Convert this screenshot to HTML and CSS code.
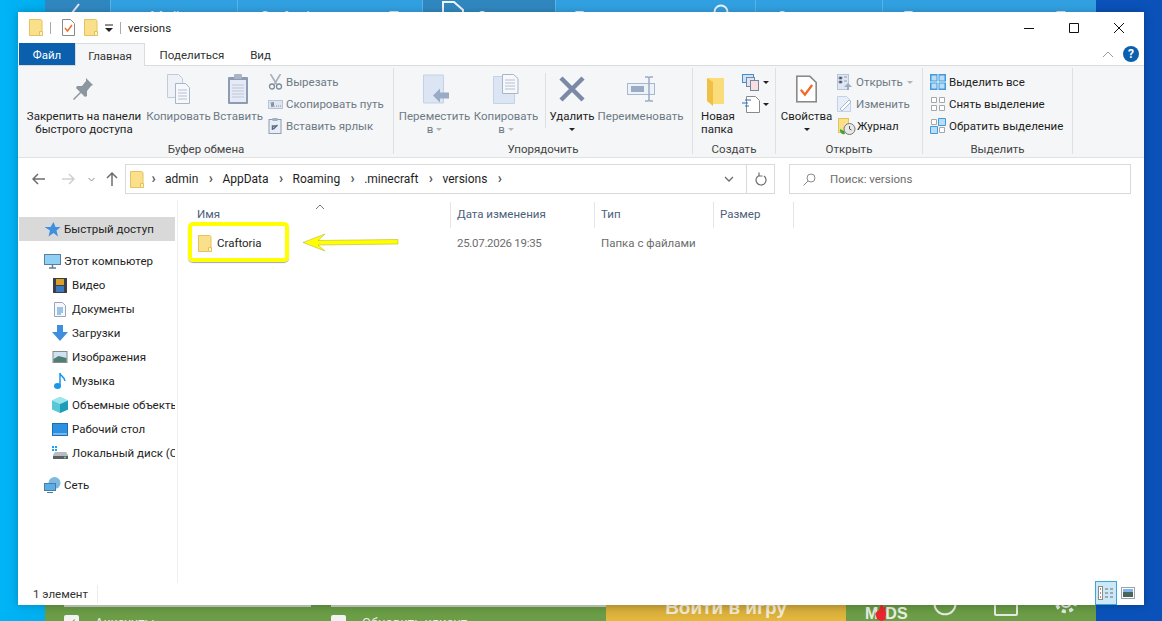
FILE: index.html
```html
<!DOCTYPE html>
<html>
<head>
    <meta charset="UTF-8">
    <title>versions</title>
    <link rel="stylesheet" href="styles.css">
</head>
<body>
    <svg class="defs" width="0" height="0">
        <symbol id="folder" viewBox="0 0 14 17">
            <path d="M.5.5h11l1.500 1v15H.5z" fill="#fbe08c" stroke="#e6c25f"/>
            <path d="M10.500 16.500v-4h3v4z" fill="#fff3c4" stroke="#e6c25f"/>
        </symbol>
        <symbol id="props" viewBox="0 0 13 17">
            <path d="M.5.5h8l4 4v12H.5z" fill="#fff" stroke="#8a8a8a"/>
            <path d="M3 9l2.500 3L10 6" fill="none" stroke="#f0692a" stroke-width="1.400"/>
        </symbol>
    </svg>

    <div class="site-top">
        <div class="site-tab dark"><svg width="20" height="20" viewBox="0 0 20 20"><path d="M3 18L14 4" stroke="#e8eef4" stroke-width="2"/></svg></div>
        <div class="site-tab w-home">Мой дом</div>
        <div class="site-tab w-craft">Craftoria<span class="site-caret"></span></div>
        <div class="site-tab dark w-create"><svg width="24" height="30" viewBox="0 0 24 30"><path d="M2 2h11l9 8v18H2z" fill="none" stroke="#eef4f8" stroke-width="2"/></svg><span>Создать</span></div>
        <div class="site-tab w-search">Поиск<svg class="site-loupe" width="20" height="24" viewBox="0 0 20 24"><circle cx="10" cy="12" r="6.500" fill="none" stroke="#eef4f8" stroke-width="2"/></svg></div>
        <div class="site-tab w-sort">Сортировать</div>
        <div class="site-tab w-pop">Популярные<span class="site-caret"></span></div>
    </div>

    <div class="site-bottom">
        <div class="site-check"><span class="box">✓</span>Аккаунты</div>
        <div class="site-check second"><span class="box"></span>Обновить клиент</div>
        <div class="site-play">Войти в игру</div>
        <div class="site-tools">
            <div class="mods">M<svg width="13" height="18" viewBox="0 0 14 20"><path d="M7 0l2 5 3-1-1 5 3 3-3 3 1 3-5 2-5-2-2-6 3-4 1 1z" fill="#e8262c"/></svg>DS</div>
            <svg class="t-arc" width="24" height="24" viewBox="0 0 24 24"><path d="M4 5a10.500 10.500 0 1 0 16 0" fill="none" stroke="#e4e8e0" stroke-width="2"/></svg>
            <span class="tool-box"></span>
            <svg class="t-gear" width="24" height="26" viewBox="0 0 24 26"><circle cx="12" cy="12" r="5" fill="none" stroke="#e4e8e0" stroke-width="2"/><circle cx="12" cy="12" r="9.500" fill="none" stroke="#e4e8e0" stroke-width="3.500" stroke-dasharray="4 3.500"/></svg>
        </div>
    </div>

    <div class="window">
        <div class="titlebar">
            <svg class="ic-folder" width="14" height="17"><use href="#folder"/></svg>
            <span class="qa-sep"></span>
            <svg class="ic-props" width="13" height="17"><use href="#props"/></svg>
            <svg class="ic-folder2" width="14" height="17"><use href="#folder"/></svg>
            <svg class="qa-drop" width="8" height="8" viewBox="0 0 8 8"><path d="M0 1h8" stroke="#222"/><path d="M0 4h8L4 8z" fill="#222"/></svg>
            <span class="qa-sep second"></span>
            <span class="title">versions</span>
            <div class="win-controls">
                <svg width="45" height="30" viewBox="0 0 45 30"><path d="M18 15.500h10" stroke="#111"/></svg>
                <svg width="45" height="30" viewBox="0 0 45 30"><path d="M18.500 10.500h9v9h-9z" fill="none" stroke="#111"/></svg>
                <svg width="45" height="30" viewBox="0 0 45 30"><path d="M18 10l10 10M28 10L18 20" stroke="#111"/></svg>
            </div>
        </div>

        <div class="tabs">
            <div class="tab file">Файл</div>
            <div class="tab active">Главная</div>
            <div class="tab share">Поделиться</div>
            <div class="tab view">Вид</div>
            <div class="tabs-right">
                <svg width="12" height="8" viewBox="0 0 12 8"><path d="M1 7l5-5 5 5" fill="none" stroke="#9a9a9a"/></svg>
                <span class="help">?</span>
            </div>
        </div>

        <div class="ribbon">
            <div class="group g-clip">
                <div class="group-body">
                    <div class="big w-pin">
                        <svg class="big-ic" width="26" height="30" viewBox="0 0 26 30"><path d="M15 4l7 7-2 1-4 5v5l-2 1-4-4-7 7-1-1 7-7-4-4 1-2h5l4-5z" fill="#8c969f"/></svg>
                        <div class="big-label">Закрепить на панели<br>быстрого доступа</div>
                    </div>
                    <div class="big off w-copy">
                        <svg class="big-ic" width="26" height="32" viewBox="0 0 26 32"><path d="M1.500 1.500h11l4 4v19h-15z" fill="#eef1f6" stroke="#c3cbd8"/><path d="M9.500 10.500h10l4 4v16h-14z" fill="#f7f8fb" stroke="#a9b5c8"/><path d="M12 17h9M12 20h9M12 23h9M12 26h9" stroke="#b5c0d2"/></svg>
                        <div class="big-label">Копировать</div>
                    </div>
                    <div class="big off w-paste">
                        <svg class="big-ic" width="22" height="32" viewBox="0 0 22 32"><rect x="1" y="4" width="20" height="27" rx="1" fill="#8d9bb3"/><rect x="3" y="7" width="16" height="22" fill="#e6eaf4"/><path d="M5 12h12M5 15h12M5 18h12M5 21h12M5 24h12" stroke="#bcc6d8"/><rect x="7" y="1" width="8" height="5" rx="1" fill="#aab4c4"/></svg>
                        <div class="big-label">Вставить</div>
                    </div>
                    <div class="small-col off">
                        <div class="small"><svg width="14" height="16" viewBox="0 0 14 16"><path d="M2 0l6 10M12 0L6 10" stroke="#a8b0bb" stroke-width="1.600"/><circle cx="3.500" cy="12.500" r="2.500" fill="none" stroke="#7f8b9a" stroke-width="1.300"/><circle cx="10.500" cy="12.500" r="2.500" fill="none" stroke="#7f8b9a" stroke-width="1.300"/></svg>Вырезать</div>
                        <div class="small"><svg width="15" height="9" viewBox="0 0 15 9"><rect x=".5" y=".5" width="14" height="8" fill="#dfe6f2" stroke="#b7c3d6"/><path d="M3 2l1 5 1-5 1 5M8 6h1M10 6h1M12 6h1" fill="none" stroke="#66758c" stroke-width=".8"/></svg>Скопировать путь</div>
                        <div class="small"><svg width="14" height="16" viewBox="0 0 14 16"><rect x=".5" y="1.500" width="12" height="14" fill="#e9edf5" stroke="#8d9bb3"/><rect x="4" y="0" width="5" height="3" fill="#a3aec0"/><path d="M4 12V8h4M5 11l4-4" fill="none" stroke="#5c6b82" stroke-width="1.500"/></svg>Вставить ярлык</div>
                    </div>
                </div>
                <div class="group-name">Буфер обмена</div>
            </div>

            <div class="group g-org">
                <div class="group-body">
                    <div class="big off w-move">
                        <svg class="big-ic" width="28" height="29" viewBox="0 0 28 29"><path d="M.500.500h20v28h-20z" fill="#dce5f3" stroke="#c4d1e6"/><path d="M10 21l7-7v4h9v6h-9v4z" fill="#9aabc6"/></svg>
                        <div class="big-label">Переместить<br>в <i class="caret grey"></i></div>
                    </div>
                    <div class="big off w-copyto">
                        <svg class="big-ic" width="26" height="30" viewBox="0 0 26 30"><path d="M.500 2.500h21v27H.500z" fill="#dce5f3" stroke="#c4d1e6"/><path d="M9.500.500h11l4.500 4v15H9.500z" fill="#f6f8fb" stroke="#a9b5c8"/><path d="M12 6h10M12 9h10M12 12h10M12 15h10" stroke="#b5c0d2"/></svg>
                        <div class="big-label">Копировать<br>в <i class="caret grey"></i></div>
                    </div>
                    <span class="inner-sep"></span>
                    <div class="big w-del">
                        <svg class="big-ic" width="26" height="26" viewBox="0 0 26 26"><path d="M2 2l22 22M24 2L2 24" stroke="#7a8aa6" stroke-width="4.500"/></svg>
                        <div class="big-label">Удалить<br><i class="caret"></i></div>
                    </div>
                    <div class="big off w-ren">
                        <svg class="big-ic" width="28" height="26" viewBox="0 0 28 26"><rect x=".5" y="7.500" width="27" height="11" fill="#edf1f8" stroke="#a9b7ce"/><rect x="4" y="10" width="13" height="6" fill="#9aabc6"/><path d="M18 1h3l1 1 1-1h3M22 2v22M18 25h3l1-1 1 1h3" fill="none" stroke="#9aabc6" stroke-width="1.500"/></svg>
                        <div class="big-label">Переименовать</div>
                    </div>
                </div>
                <div class="group-name">Упорядочить</div>
            </div>

            <div class="group g-new">
                <div class="group-body">
                    <div class="big left w-newf">
                        <svg class="big-ic" width="20" height="28" viewBox="0 0 20 28"><path d="M0 0h17v26H5l-5-3z" fill="#fadc7a"/><path d="M0 0l6 4v24l-6-5z" fill="#f0bf45"/></svg>
                        <div class="big-label">Новая<br>папка</div>
                    </div>
                    <div class="mini-col">
                        <div class="mini"><svg width="19" height="17" viewBox="0 0 19 17"><rect x=".5" y=".5" width="11" height="8" fill="#cfe3f6" stroke="#3f8fd0"/><rect x="4.500" y="3.500" width="8" height="9" fill="#dfe6f2" stroke="#77869c"/><rect x="8.500" y="6.500" width="8" height="10" fill="#f7dfe0" stroke="#77869c"/></svg><i class="caret"></i></div>
                        <div class="mini"><svg width="19" height="17" viewBox="0 0 19 17"><path d="M4.500.5h9l4 4v12h-13z" fill="#fff" stroke="#8a8a8a"/><path d="M3 4h6M0 7h6M3 10h4" stroke="#2a6fc0" stroke-width="1.200"/></svg><i class="caret"></i></div>
                    </div>
                </div>
                <div class="group-name">Создать</div>
            </div>

            <div class="group g-open">
                <div class="group-body">
                    <div class="big w-props">
                        <svg class="big-ic" width="21" height="28" viewBox="0 0 13 17"><use href="#props"/></svg>
                        <div class="big-label">Свойства<br><i class="caret"></i></div>
                    </div>
                    <div class="small-col tight">
                        <div class="small off"><svg width="15" height="16" viewBox="0 0 15 16"><rect x=".5" y=".5" width="11" height="15" fill="#dfe6f2" stroke="#b7c3d6"/><path d="M2 3h3v2H2zM2 7h3v2H2zM7 3h3M7 7h3" stroke="#8d9bb3"/><path d="M11 9l4 4h-3v3h-2v-3H7z" fill="#9aabc6"/></svg>Открыть <i class="caret grey"></i></div>
                        <div class="small off"><svg width="15" height="16" viewBox="0 0 15 16"><path d="M.5.5h9l4 4v11H.5z" fill="#e7eef8" stroke="#c4d1e6"/><path d="M3 13l9-9 2 2-9 9z" fill="#fff" stroke="#a9b7ce"/></svg>Изменить</div>
                        <div class="small journal"><svg width="18" height="17" viewBox="0 0 18 17"><rect x=".5" y=".5" width="10" height="14" fill="#fbe08c" stroke="#e6c25f"/><circle cx="11.500" cy="11" r="5.500" fill="#e8e8e8" stroke="#777"/><path d="M11.500 8v3l2 1" fill="none" stroke="#555"/><path d="M2 11a4 4 0 0 0 5 5l-1-3z" fill="#3fa535"/></svg>Журнал</div>
                    </div>
                </div>
                <div class="group-name">Открыть</div>
            </div>

            <div class="group g-sel">
                <div class="group-body">
                    <div class="small-col sel">
                        <div class="small"><svg width="16" height="16" viewBox="0 0 16 16"><path d="M0 0h7.500v7.500H0zM8.500 0H16v7.500H8.500zM0 8.500h7.500V16H0zM8.500 8.500H16V16H8.500z" fill="#3f9be0"/><path d="M1.500 1.500h5v5h-5zM9.500 9.500h5v5h-5zM9.500 1.500h5v5h-5zM1.500 9.500h5v5h-5z" fill="#bcdcf5"/></svg>Выделить все</div>
                        <div class="small"><svg width="16" height="16" viewBox="0 0 16 16"><path d="M1.500 1.500h5v5h-5zM9.500 1.500h5v5h-5zM1.500 9.500h5v5h-5zM9.500 9.500h5v5h-5z" fill="#fff" stroke="#a8a8a8"/></svg>Снять выделение</div>
                        <div class="small"><svg width="16" height="16" viewBox="0 0 16 16"><path d="M1.500 1.500h5v5h-5zM9.500 9.500h5v5h-5z" fill="#fff" stroke="#a8a8a8"/><path d="M8.500.5h7v7h-7zM.5 8.500h7v7h-7z" fill="#bcdcf5" stroke="#3f9be0"/></svg>Обратить выделение</div>
                    </div>
                </div>
                <div class="group-name">Выделить</div>
            </div>
        </div>

        <div class="addr-row">
            <div class="nav-btns">
                <svg width="13" height="12" viewBox="0 0 13 12"><path d="M6 1L1 6l5 5M1 6h12" fill="none" stroke="#6d6d6d" stroke-width="1.500"/></svg>
                <svg width="13" height="12" viewBox="0 0 13 12"><path d="M7 1l5 5-5 5M12 6H0" fill="none" stroke="#cfcfcf" stroke-width="1.500"/></svg>
                <svg width="7" height="5" viewBox="0 0 7 5"><path d="M.5 1l3 3 3-3" fill="none" stroke="#8a8a8a"/></svg>
                <svg width="12" height="14" viewBox="0 0 12 14"><path d="M1 6l5-5 5 5M6 1v13" fill="none" stroke="#6d6d6d" stroke-width="1.500"/></svg>
            </div>
            <div class="addr">
                <svg class="addr-folder" width="14" height="17"><use href="#folder"/></svg>
                <span class="chev">›</span><span class="crumb">admin</span>
                <span class="chev">›</span><span class="crumb">AppData</span>
                <span class="chev">›</span><span class="crumb">Roaming</span>
                <span class="chev">›</span><span class="crumb">.minecraft</span>
                <span class="chev">›</span><span class="crumb">versions</span>
                <span class="chev">›</span>
                <div class="addr-end">
                    <svg class="addr-drop" width="10" height="6" viewBox="0 0 10 6"><path d="M1 1l4 4 4-4" fill="none" stroke="#6d6d6d" stroke-width="1.300"/></svg>
                    <span class="refresh"><svg width="12" height="14" viewBox="0 0 12 14"><path d="M9 4a5 5 0 1 1-5-.5M4 .5v3.500h3.500" fill="none" stroke="#6d6d6d" stroke-width="1.200"/></svg></span>
                </div>
            </div>
            <div class="search">
                <svg width="13" height="13" viewBox="0 0 13 13"><circle cx="8" cy="5" r="4" fill="none" stroke="#8a8a8a"/><path d="M5 8l-4.500 4.500" stroke="#8a8a8a"/></svg>
                <span>Поиск: versions</span>
            </div>
        </div>

        <div class="main">
            <div class="nav-pane">
                <div class="nav-row top selected"><svg width="16" height="15" viewBox="0 0 16 15"><path d="M9 0l2 5h5l-4 3.500 1.500 6L9 11l-5 3.500 1.500-6L0 5h6z" fill="#3d8fe0"/></svg>Быстрый доступ</div>
                <div class="nav-row top spaced"><svg width="17" height="15" viewBox="0 0 17 15"><rect x=".5" y=".5" width="16" height="10" fill="#8fd0f4" stroke="#5b7f9a"/><path d="M5 14h7M8.500 11v3" stroke="#5b7f9a" stroke-width="1.500"/></svg>Этот компьютер</div>
                <div class="nav-row"><svg width="14" height="15" viewBox="0 0 14 15"><rect width="14" height="15" fill="#3a3f46"/><rect x="3" y="1" width="8" height="6" fill="#d8a028"/><rect x="3" y="8" width="8" height="6" fill="#3a78c0"/></svg>Видео</div>
                <div class="nav-row"><svg width="12" height="15" viewBox="0 0 12 15"><path d="M.5.5h8l3 3v11H.5z" fill="#f6f8fb" stroke="#9aa6b6"/><path d="M3 6h6M3 8h6M3 10h6M3 12h4" stroke="#3f8fd0"/></svg>Документы</div>
                <div class="nav-row"><svg width="16" height="16" viewBox="0 0 16 16"><path d="M5 0h6v7h5l-8 9-8-9h5z" fill="#3f8fe0"/></svg>Загрузки</div>
                <div class="nav-row"><svg width="15" height="12" viewBox="0 0 15 12"><rect x=".5" y=".5" width="14" height="11" fill="#cfe3f2" stroke="#8a8a8a"/><path d="M1 8l5-3 8 2v4H1z" fill="#4f7f74"/></svg>Изображения</div>
                <div class="nav-row"><svg width="12" height="16" viewBox="0 0 12 16"><ellipse cx="3.500" cy="13" rx="3.500" ry="3" fill="#1e96e8"/><path d="M6 13V0c0 3 5 4 5 8" fill="none" stroke="#1e96e8" stroke-width="1.500"/></svg>Музыка</div>
                <div class="nav-row"><svg width="16" height="16" viewBox="0 0 16 16"><path d="M8 0l8 3.500v9L8 16l-8-3.500v-9z" fill="#58c8d8"/><path d="M8 7l8-3.500v9L8 16z" fill="#1f9cb8"/><path d="M8 0l8 3.500L8 7 0 3.500z" fill="#9ce6ee"/></svg>Объемные объекты</div>
                <div class="nav-row"><svg width="16" height="13" viewBox="0 0 16 13"><rect x=".5" y=".5" width="15" height="12" fill="#2e90e0" stroke="#1c6cb4"/><path d="M1 11h14" stroke="#bfe0f8"/></svg>Рабочий стол</div>
                <div class="nav-row"><svg width="16" height="14" viewBox="0 0 16 14"><path d="M0 0h2v2H0zM3 0h2v2H3zM0 3h2v2H0zM3 3h2v2H3z" fill="#1ea0f0"/><path d="M1 9l2-3h11l2 3v4H1z" fill="#b8bcc2"/><path d="M1 10h15v3H1z" fill="#5c6066"/><circle cx="13" cy="11.500" r="1" fill="#6ee06e"/></svg>Локальный диск (C:)</div>
                <div class="nav-row top spaced"><svg width="17" height="16" viewBox="0 0 17 16"><circle cx="10.500" cy="6" r="6" fill="#7fb8e0"/><rect x=".5" y="6.500" width="11" height="7" fill="#5aaee8" stroke="#4a7ca0"/><path d="M3 15.500h6" stroke="#4a7ca0"/></svg>Сеть</div>
            </div>
            <div class="list">
                <span class="sort-caret"><svg width="10" height="6" viewBox="0 0 10 6"><path d="M1 5l4-4 4 4" fill="none" stroke="#7a7a7a"/></svg></span>
                <div class="list-head">
                    <div class="col c-name">Имя</div>
                    <div class="col c-date">Дата изменения</div>
                    <div class="col c-type">Тип</div>
                    <div class="col c-size">Размер</div>
                </div>
                <div class="list-row">
                    <div class="col c-name file-name"><svg width="14" height="17"><use href="#folder"/></svg>Craftoria</div>
                    <div class="col c-date">25.07.2026 19:35</div>
                    <div class="col c-type">Папка с файлами</div>
                </div>
            </div>
        </div>

        <div class="statusbar">
            <span class="count">1 элемент</span>
            <div class="view-btns">
                <span class="view-btn active"><svg width="16" height="14" viewBox="0 0 16 14"><rect x=".5" y=".5" width="4" height="13" fill="#fff" stroke="#8a8a8a"/><path d="M7 3h3M12 3h3M7 7h3M12 7h3M7 11h3M12 11h3" stroke="#6d6d6d"/><path d="M2 2.500h1v1H2zM2 6.500h1v1H2z" fill="#333"/><path d="M2 10.500h1v1H2z" fill="#c00"/></svg></span>
                <span class="view-btn second"><svg width="14" height="12" viewBox="0 0 14 12"><rect x=".5" y=".5" width="13" height="11" fill="#fff" stroke="#a0a0a0"/><path d="M2 2h10v3H2z" fill="#7fb4ec"/><path d="M2 5h10v5H2z" fill="#44675e"/></svg></span>
            </div>
        </div>

        <div class="mark-box"></div>
        <svg class="mark-arrow" width="96" height="22" viewBox="0 0 96 22">
            <path d="M0 10.500L22 2l-7 6.500 80-1v4.500l-80 1 7 6z" fill="#ffff00" stroke="#b9b93a" stroke-width=".6"/>
        </svg>
    </div>
</body>
</html>
```

FILE: styles.css
```css
* {
    box-sizing: border-box;
}
html, body {
    margin: 0;
    height: 100%;
}
body {
    position: relative;
    overflow: hidden;
    font-family: Roboto, "Noto Sans", sans-serif;
    font-size: 11.5px;
    color: #1e1e1e;
    background: linear-gradient(90deg, #00b4f6 0, #00aeee 46px, #0a52ba 46px, #0a52ba 100%);
}
.defs {
    position: absolute;
}

/* the web page behind the window */
.site-top {
    position: absolute;
    top: 0;
    left: 45px;
    width: 1051px;
    height: 14px;
    overflow: hidden;
    display: flex;
    color: #e8f2fa;
    font-size: 15px;
}
.site-tab {
    position: relative;
    height: 30px;
    display: flex;
    align-items: flex-end;
    background: linear-gradient(#2f9fe0, #3cabec);
    border-right: 1px solid #5ab4e6;
    padding: 0 0 4px 40px;
    flex: none;
}
.site-tab.dark {
    background: linear-gradient(#2f86bf, #3592cc);
}
.site-tab:first-child {
    width: 66px;
    padding: 0 0 0 20px;
    align-items: flex-start;
}
.w-home { width: 127px; padding-left: 39px; }
.w-craft { width: 185px; padding-left: 22px; }
.w-create { width: 133px; padding-left: 18px; gap: 12px; }
.w-create svg { margin-bottom: -4px; }
.w-search { width: 200px; padding-left: 18px; }
.w-sort { width: 127px; padding-left: 21px; }
.w-pop { width: 213px; padding-left: 20px; border-right: none; }
.site-caret {
    position: absolute;
    right: 23px;
    top: 11px;
    width: 0;
    height: 0;
    border: 5px solid transparent;
    border-top: 5px solid #d8e8f4;
}
.w-pop .site-caret { right: 30px; }
.site-loupe {
    position: absolute;
    right: 24px;
    top: 0;
}

.site-bottom {
    position: absolute;
    left: 45px;
    bottom: 0;
    width: 1051px;
    height: 30px;
    display: flex;
    align-items: flex-start;
    overflow: hidden;
    background: linear-gradient(#5f9240, #6c9f47);
    color: #e8eee0;
    font-size: 13px;
}
.site-check {
    position: relative;
    flex: none;
    display: flex;
    gap: 16px;
    width: 266px;
    margin-top: 24px;
    padding-left: 19px;
    line-height: 16px;
}
.site-check::before {
    content: "";
    position: absolute;
    left: 19px;
    top: -10px;
    width: 247px;
    height: 2px;
    background: #c9d0c2;
}
.site-check.second {
    width: 295px;
    padding-left: 20px;
}
.site-check.second::before {
    left: 20px;
    width: 275px;
}
.site-check .box {
    width: 15px;
    height: 15px;
    border-radius: 2px;
    background: #f2f2f2;
    color: #6c9f47;
    font-size: 12px;
    line-height: 16px;
    text-align: center;
}
.site-play {
    flex: none;
    width: 240px;
    height: 30px;
    padding-top: 5px;
    background: linear-gradient(#b8953a, #e6b93c);
    color: #f0e8d0;
    font-family: "Liberation Sans", sans-serif;
    font-size: 19px;
    font-weight: bold;
    line-height: 24px;
    text-align: center;
}
.site-tools {
    flex: none;
    display: flex;
    align-items: flex-end;
    height: 30px;
    padding: 0 0 5px 19px;
}
.mods {
    display: flex;
    align-items: flex-end;
    margin-bottom: -5px;
    font-family: "Liberation Sans", sans-serif;
    font-size: 16px;
    font-weight: bold;
    line-height: 14px;
    color: #e8eee0;
    width: 40px;
}
.mods svg { margin: 0 -3px; flex: none; }
.t-arc { margin-left: 28px; flex: none; }
.tool-box {
    flex: none;
    width: 24px;
    height: 26px;
    margin-left: 37px;
    border: 2px solid #e4e8e0;
    border-radius: 2px;
}
.t-gear { margin-left: 36px; flex: none; }

/* explorer window */
.window {
    position: absolute;
    left: 18px;
    top: 12px;
    width: 1126px;
    height: 593px;
    display: flex;
    flex-direction: column;
    background: #fff;
    box-shadow: 0 0 8px rgba(0, 0, 0, 0.25);
}
.titlebar {
    height: 31px;
    flex: none;
    display: flex;
    align-items: center;
    padding-left: 11px;
}
.ic-folder, .ic-props, .ic-folder2 { flex: none; }
.qa-sep {
    width: 1px;
    height: 12px;
    background: #a8a8a8;
    margin: 0 11px 0 7px;
}
.qa-sep.second { margin: 0 7px 0 7px; }
.ic-folder2 { margin-left: 9px; }
.qa-drop { margin-left: 7px; }
.title {
    margin-top: 1px;
    font-size: 11.5px;
    color: #222;
}
.win-controls {
    margin-left: auto;
    display: flex;
    padding-right: 3px;
}

.tabs {
    height: 23px;
    flex: none;
    display: flex;
    align-items: stretch;
    border-bottom: 1px solid #dadbdc;
}
.tab {
    display: flex;
    align-items: center;
    justify-content: center;
    padding-top: 1px;
    color: #333;
}
.tab.file {
    width: 56px;
    margin-left: 1px;
    background: #0b60ae;
    color: #fff;
}
.tab.active {
    width: 70px;
    height: 23px;
    background: #f5f6f7;
    border: 1px solid #dadbdc;
    border-bottom: none;
}
.tab.share { width: 80px; margin-left: 7px; }
.tab.view { width: 57px; }
.tabs-right {
    margin-left: auto;
    display: flex;
    align-items: center;
    gap: 9px;
    padding-right: 5px;
}
.help {
    width: 16px;
    height: 16px;
    border-radius: 50%;
    background: #0b60ae;
    color: #fff;
    font-weight: bold;
    font-size: 12px;
    line-height: 16px;
    text-align: center;
}

.ribbon {
    height: 92px;
    flex: none;
    display: flex;
    background: #f5f6f7;
    border-bottom: 1px solid #e1e2e3;
    padding: 2px 0 3px 1px;
}
.group {
    display: flex;
    flex-direction: column;
    flex: none;
    border-right: 1px solid #dfe0e2;
}
.group-body {
    flex: 1;
    display: flex;
    min-height: 0;
}
.group-name {
    height: 17px;
    line-height: 25px;
    text-align: center;
    color: #444;
}
.g-clip { width: 375px; }
.g-org { width: 299px; }
.g-new { width: 83px; }
.g-open { width: 147px; }
.g-sel { width: 150px; }

.big {
    display: flex;
    flex-direction: column;
    align-items: center;
    flex: none;
    padding-top: 4px;
    text-align: center;
    line-height: 13px;
    white-space: nowrap;
}
.big-ic {
    height: 34px;
    margin-bottom: 4px;
    flex: none;
}
.big.left { align-items: flex-start; text-align: left; }
.off { color: #6e7a86; }
.w-pin { width: 114px; margin-left: 8px; }
.w-copy { width: 65px; margin-left: 5px; }
.w-paste { width: 46px; margin-left: 4px; }
.small-col {
    display: flex;
    flex-direction: column;
    margin-left: 7px;
    padding-top: 3px;
}
.small {
    flex: none;
    display: flex;
    align-items: center;
    gap: 3px;
    height: 22px;
    white-space: nowrap;
}
.small svg { flex: none; width: 15px; }
.w-move { width: 69px; margin-left: 6px; }
.w-move .big-ic { margin-left: 5px; }
.w-copyto { width: 64px; margin-left: 5px; }
.inner-sep {
    width: 1px;
    height: 55px;
    margin: 5px 5px 0 7px;
    background: #dfe0e2;
}
.w-del { width: 42px; }
.w-ren { width: 85px; margin-left: 5px; }
.w-newf { width: 32px; margin-left: 8px; }
.w-newf .big-ic { margin: 3px 0 1px 6px; }
.mini-col {
    display: flex;
    flex-direction: column;
    margin-left: 9px;
    padding-top: 5px;
    gap: 4px;
}
.mini {
    display: flex;
    align-items: center;
    gap: 2px;
    height: 18px;
}
.caret {
    display: inline-block;
    width: 0;
    height: 0;
    border: 3px solid transparent;
    border-top: 3px solid #222;
    border-bottom: none;
    vertical-align: middle;
}
.caret.grey { border-top-color: #b5b5b5; }
.w-props { width: 49px; margin-left: 6px; }
.small-col.tight { margin-left: 6px; color: #1e1e1e; }
.tight .small { gap: 4px; }
.small-col.sel { margin-left: 7px; }
.sel .small svg { width: 16px; }
.tight .journal { margin-left: 1px; gap: 1px; }
.journal svg { width: 18px; }

.addr-row {
    height: 42px;
    flex: none;
    display: flex;
    align-items: center;
}
.nav-btns {
    width: 107px;
    flex: none;
    display: flex;
    align-items: center;
    padding-left: 14px;
}
.nav-btns svg:nth-child(2) { margin-left: 17px; }
.nav-btns svg:nth-child(3) { margin-left: 13px; }
.nav-btns svg:nth-child(4) { margin-left: 11px; }
.addr {
    width: 650px;
    height: 30px;
    flex: none;
    display: flex;
    align-items: center;
    border: 1px solid #d9d9d9;
    padding-left: 4px;
    color: #1e1e1e;
}
.addr-folder { margin-right: 2px; flex: none; }
.chev {
    width: 15px;
    text-align: center;
    color: #555;
    font-size: 14px;
    font-weight: bold;
    line-height: 14px;
    margin-top: -2px;
}
.crumb { margin: 0 5px 0 4px; font-size: 12px; }
.addr-end {
    margin-left: auto;
    height: 100%;
    display: flex;
    align-items: center;
}
.addr-drop { margin-right: 12px; }
.refresh {
    width: 28px;
    height: 100%;
    border-left: 1px solid #d9d9d9;
    display: flex;
    align-items: center;
    justify-content: center;
}
.search {
    width: 342px;
    height: 30px;
    flex: none;
    margin-left: 14px;
    display: flex;
    align-items: center;
    gap: 14px;
    padding-left: 13px;
    border: 1px solid #d9d9d9;
    color: #6d6d6d;
}

.main {
    flex: 1;
    display: flex;
    min-height: 0;
}
.nav-pane {
    width: 160px;
    flex: none;
    border-right: 1px solid #f0f0f0;
    padding-top: 17px;
    overflow: hidden;
}
.nav-row {
    display: flex;
    align-items: center;
    height: 24px;
    padding-left: 34px;
    margin-right: 2px;
    white-space: nowrap;
    overflow: hidden;
}
.nav-row svg {
    flex: none;
    width: 16px;
    margin-right: 4px;
}
.nav-row.top { padding-left: 26px; }
.nav-row.top svg { width: 17px; margin-right: 3px; }
.nav-row.spaced { margin-top: 8px; }
.nav-row.selected { background: #d9d9d9; padding-left: 25px; margin-left: 1px; }

.list {
    flex: 1;
    position: relative;
}
.sort-caret {
    position: absolute;
    left: 137px;
    top: -1px;
}
.list-head {
    display: flex;
    height: 26px;
    margin-top: 2px;
    color: #4c607a;
}
.list-head .col {
    border-right: 1px solid #e5e5e5;
    line-height: 24px;
}
.col {
    flex: none;
    padding-left: 6px;
    white-space: nowrap;
}
.c-name { width: 273px; padding-left: 19px; }
.c-date { width: 144px; }
.c-type { width: 119px; }
.c-size { width: 80px; }
.list-row {
    display: flex;
    align-items: center;
    height: 30px;
    color: #6d6d6d;
}
.list-row .c-date { letter-spacing: -0.3px; }
.file-name {
    display: flex;
    align-items: center;
    gap: 5px;
    color: #1e1e1e;
    padding-left: 20px;
}

.statusbar {
    height: 22px;
    flex: none;
    display: flex;
    align-items: center;
    padding-left: 15px;
    color: #333;
}
.count {
    width: 65px;
    height: 18px;
    line-height: 18px;
    border-right: 1px solid #ececec;
}
.view-btns {
    margin-left: auto;
    margin-right: 9px;
    align-self: stretch;
    display: flex;
    align-items: flex-end;
    gap: 4px;
}
.view-btn {
    width: 22px;
    height: 24px;
    display: flex;
    align-items: center;
    justify-content: center;
}
.view-btn.active {
    background: #cce8f7;
    border: 1px solid #3ba5dd;
}
.view-btn.second { width: 14px; }

/* yellow marks drawn over the screenshot */
.mark-box {
    position: absolute;
    left: 170px;
    top: 210px;
    width: 101px;
    height: 40px;
    border: 4px solid #ffff00;
    border-radius: 5px;
    box-shadow: 0 1px 1px rgba(0, 0, 0, 0.35);
}
.mark-arrow {
    position: absolute;
    left: 285px;
    top: 220px;
}
```
